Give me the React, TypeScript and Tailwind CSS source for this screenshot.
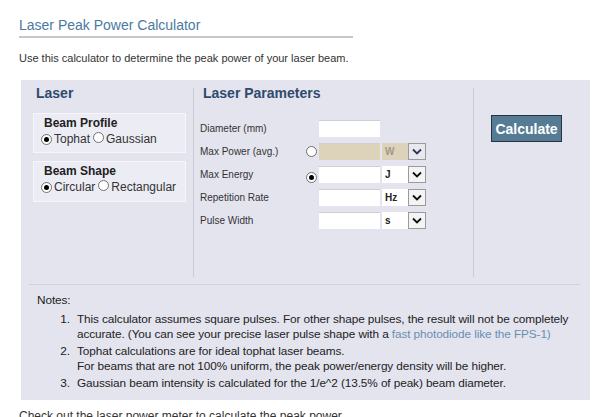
import React from "react";

const font = { fontFamily: '"Liberation Sans", Arial, sans-serif' };

function Radio({ checked }: { checked?: boolean }) {
  return (
    <span className="inline-flex items-center justify-center w-[11px] h-[11px] rounded-full border border-[#707070] bg-white flex-none">
      {checked && <span className="w-[5px] h-[5px] rounded-full bg-black" />}
    </span>
  );
}

function Select({ value, disabled }: { value: string; disabled?: boolean }) {
  return (
    <div className={`flex h-[17px] w-[44px] ml-[2px] ${disabled ? "bg-[#ddd3ba]" : "bg-white"}`}>
      <div className={`flex-1 flex items-center pl-[3px] text-[10px] font-bold ${disabled ? "text-[#a09a8a]" : "text-[#222]"}`}>{value}</div>
      <div className={`w-[18px] h-[17px] flex items-center justify-center border border-[#9a9a9a] ${disabled ? "bg-[#e8e8ee]" : "bg-[#f4f4f4]"}`}>
        <svg width="10" height="7" viewBox="0 0 10 7">
          <path d="M1 1.5 L5 5.5 L9 1.5" fill="none" stroke={disabled ? "#2a3a50" : "#111"} strokeWidth="1.8" />
        </svg>
      </div>
    </div>
  );
}

function Row({ label, radio, checked, value, disabled, noSelect }: { label: string; radio?: boolean; checked?: boolean; value?: string; disabled?: boolean; noSelect?: boolean }) {
  return (
    <div className="flex items-center h-[23px]">
      <div className="w-[106px] flex-none text-[10px] text-[#333]">{label}</div>
      <div className="w-[13px] flex-none">{radio && <Radio checked={checked} />}</div>
      <div className={`w-[61px] h-[17px] flex-none border-t border-[#cfcfcf] ${disabled ? "bg-[#ddd3ba]" : "bg-white"}`} />
      {!noSelect && <Select value={value || ""} disabled={disabled} />}
    </div>
  );
}

export default function App() {
  return (
    <div className="w-[600px] h-[417px] overflow-hidden bg-white text-[#333]" style={font}>
      <div className="pl-[19px] pt-[17px]">
        <div className="w-[334px] border-b-2 border-[#c8c8c8] pb-[3px]">
          <div className="text-[14px] leading-[16px] text-[#4b7aa0]">Laser Peak Power Calculator</div>
        </div>
        <div className="mt-[13px] text-[11px] leading-[14px] text-[#333]">Use this calculator to determine the peak power of your laser beam.</div>
      </div>
      <div className="ml-[21px] mt-[15px] w-[569px] h-[320px] bg-[#e4e4ef] pt-[5px]">
        <div className="flex h-[192px]">
          <div className="w-[172px] flex-none pl-[12px] pr-[7px]">
            <div className="pl-[3px] text-[14px] leading-[16px] font-bold text-[#2f4a6c]">Laser</div>
            <div className="mt-[12px] h-[40px] bg-[#ececf4] border border-[#f6f6fa] pl-[7px] pt-[2px]">
              <div className="ml-[3px] text-[12px] leading-[15px] font-bold text-[#222]">Beam Profile</div>
              <div className="flex items-center text-[12px] leading-[17px] text-[#333]">
                <Radio checked />
                <span className="ml-[2px]">Tophat</span>
                <span className="ml-[3px]"><Radio /></span>
                <span className="ml-[2px]">Gaussian</span>
              </div>
            </div>
            <div className="mt-[8px] h-[41px] bg-[#ececf4] border border-[#f6f6fa] pl-[7px] pt-[2px]">
              <div className="ml-[3px] text-[12px] leading-[15px] font-bold text-[#222]">Beam Shape</div>
              <div className="flex items-center text-[12px] leading-[17px] text-[#333]">
                <Radio checked />
                <span className="ml-[2px]">Circular</span>
                <span className="ml-[3px]"><Radio /></span>
                <span className="ml-[2px]">Rectangular</span>
              </div>
            </div>
          </div>
          <div className="w-px mt-[3px] bg-[#cacad4] flex-none" />
          <div className="w-[279px] flex-none pl-[6px]">
            <div className="pl-[3px] text-[14px] leading-[16px] font-bold text-[#2f4a6c]">Laser Parameters</div>
            <div className="mt-[16px]">
              <Row label="Diameter (mm)" noSelect />
              <Row label="Max Power (avg.)" radio value="W" disabled />
              <Row label="Max Energy" radio checked value="J" />
              <Row label="Repetition Rate" value="Hz" />
              <Row label="Pulse Width" value="s" />
            </div>
          </div>
          <div className="w-px mt-[3px] bg-[#cacad4] flex-none" />
          <div className="flex-1 pl-[17px] pt-[30px]">
            <button className="w-[71px] h-[27px] bg-[#567c95] border border-[#26343e] text-white text-[14px] font-bold leading-[16px]">Calculate</button>
          </div>
        </div>
        <div className="ml-[8px] mr-[10px] mt-[7px] h-px bg-[#d2d2dc]" />
        <div className="pl-[16px] text-[11.8px] leading-[15px] text-[#222] tracking-[-0.1px]">
          <div className="mt-[8px]">Notes:</div>
          <div className="mt-[4px] flex flex-col gap-[2px] whitespace-nowrap">
            <div className="flex">
              <span className="w-[40px] flex-none text-right pr-[7px]">1.</span>
              <span>This calculator assumes square pulses. For other shape pulses, the result will not be completely<br />accurate. (You can see your precise laser pulse shape with a <span className="text-[#6a8fae]">fast photodiode like the FPS-1)</span></span>
            </div>
            <div className="flex">
              <span className="w-[40px] flex-none text-right pr-[7px]">2.</span>
              <span>Tophat calculations are for ideal tophat laser beams.<br />For beams that are not 100% uniform, the peak power/energy density will be higher.</span>
            </div>
            <div className="flex">
              <span className="w-[40px] flex-none text-right pr-[7px]">3.</span>
              <span>Gaussian beam intensity is calculated for the 1/e^2 (13.5% of peak) beam diameter.</span>
            </div>
          </div>
        </div>
      </div>
      <div className="pl-[19px] mt-[9px] text-[12px] leading-[15px] text-[#333]">Check out the laser power meter to calculate the peak power</div>
    </div>
  );
}
